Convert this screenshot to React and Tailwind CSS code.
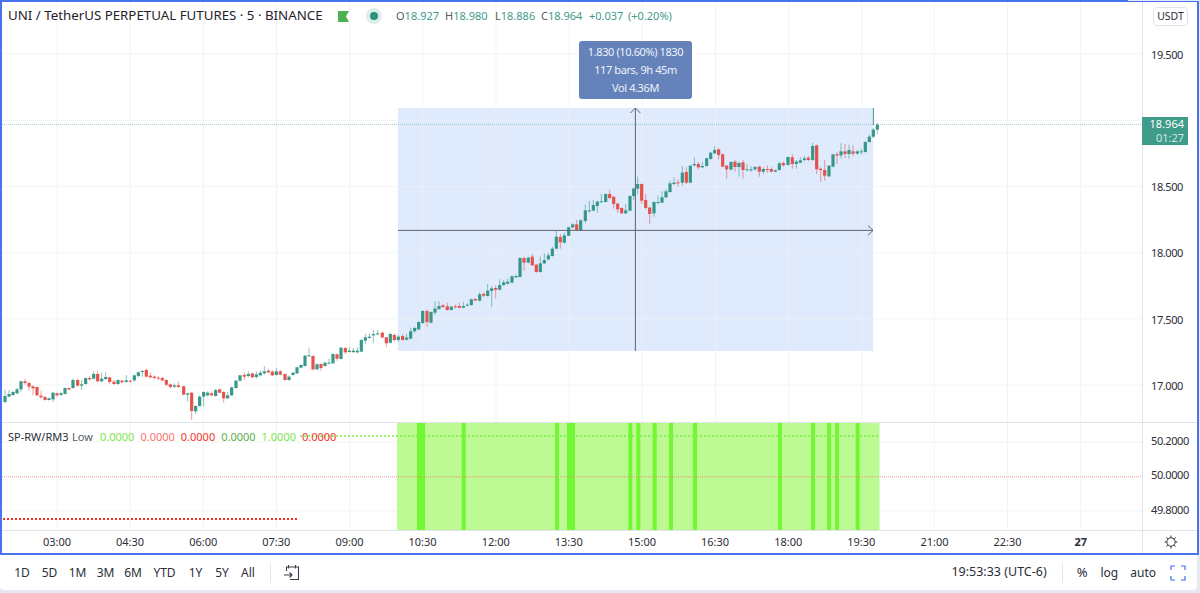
const segA = `15 168 186 g 150 190
27 162 170 g 150 172
39 156 165 g 152 168
51 148 160 g 144 162
63 124 148 g 122 156
75 124 129 r 117 134
87 129 140 r 126 152
99 139 145 r 136 166
111 141 166 r 140 168
123 167 172 r 152 175
135 171 180 r 168 182
147 175 180 g 172 182
159 158 178 g 156 186
171 160 166 r 158 170
183 160 165 g 156 168
195 144 162 g 142 164
207 144 148 r 142 152
219 120 144 g 116 146
233 120 137 r 116 140
245 133 137 g 120 150
257 114 132 g 112 134
269 114 118 r 108 122
281 102 116 g 94 118
293 102 124 r 94 126
305 116 124 g 97 126
317 111 117 g 97 120
329 112 126 r 110 132
342 125 132 r 120 135
354 120 132 g 118 134
366 122 127 r 120 130
379 121 126 g 105 128
391 122 124 r 120 128
403 106 121 g 104 125
415 97 108 g 95 112
427 93 96 g 90 110
439 90 110 r 86 112
451 107 112 r 98 116
463 110 114 r 106 118
475 113 116 r 108 120
487 114 121 r 110 124
499 120 134 r 118 138
511 133 141 r 130 146
523 136 140 g 130 144
535 136 141 r 125 144
551 139 164 r 137 166
563 160 164 g 158 185
575 158 213 r 156 240
587 198 214 g 196 222`

const segB = `599 200 228 g 196 230
611 186 200 g 184 230
623 188 196 g 184 200
635 190 196 r 184 198
647 180 198 g 178 200
659 178 188 r 176 190
671 186 205 r 184 218
683 196 205 g 186 206
695 172 196 g 170 198
708 152 174 g 150 176
720 136 152 g 134 154
733 135 140 r 128 150
745 132 138 g 124 142
757 130 142 r 128 144
769 133 141 g 124 146
781 128 136 g 122 140
793 124 130 g 108 134
805 122 127 r 116 130
817 125 136 r 120 138
829 124 135 g 114 137
841 124 134 r 120 136
855 132 150 r 130 152
867 140 150 g 136 152
879 128 135 g 126 137
891 112 130 g 110 132
903 105 113 g 103 115
915 77 108 g 75 110
927 76 79 g 55 80
939 78 118 r 76 122
951 103 118 g 100 120
963 102 114 r 100 122
975 98 108 g 96 110
987 98 100 g 85 102
999 72 100 g 70 102
1011 73 86 r 70 92
1023 53 87 g 51 89
1036 54 67 r 52 72
1048 62 66 g 52 68
1060 62 66 g 54 70
1072 62 67 g 52 70
1084 30 65 g 28 67
1096 22 32 g 12 42
1108 20 24 g 10 26
1120 12 16 g 0 40
1133 10 13 g 0 16
1147 8 22 r 6 26
1159 22 40 r 20 52
1171 12 38 g 8 40
1183 15 30 r 10 34
1195 20 30 g 14 36`

const segC = `8 438 450 r 432 452
20 443 449 g 432 451
32 424 446 g 413 448
44 414 424 g 410 428
56 396 418 g 394 420
68 363 399 g 360 402
81 363 396 r 358 410
93 366 398 g 364 400
105 356 368 g 334 374
117 348 357 g 334 360
129 346 351 r 342 354
142 349 360 r 338 362
154 350 360 g 348 362
166 349 352 r 344 356
178 348 353 r 338 355
190 348 353 g 336 355
202 344 347 g 340 349
214 328 345 g 326 348
226 327 331 r 324 334
239 313 332 g 306 334
251 312 317 r 306 322
263 302 318 g 282 320
275 295 303 g 288 350
287 294 299 r 286 326
299 285 299 g 268 301
311 277 285 g 270 288
323 275 281 g 266 284
336 259 278 g 256 280
348 258 262 g 254 264
360 204 261 g 202 263
372 204 218 r 200 242
385 203 218 g 200 220
397 200 226 r 192 228
409 224 246 r 222 248
421 220 246 g 200 248
433 210 220 g 190 222
445 196 208 g 188 212
457 176 198 g 170 200
469 140 176 g 120 178
481 141 157 r 132 176
493 136 158 g 128 160
506 112 137 g 110 139
518 103 112 g 100 116
530 103 120 r 90 122
542 91 120 g 88 122
556 61 93 g 44 100
568 61 63 g 32 68
580 45 62 g 30 64
592 35 48 g 32 68
604 34 36 g 12 38
617 12 36 g 10 38
629 12 24 r 0 28
641 20 42 r 18 56
653 41 58 r 38 68
665 54 70 r 52 72
677 61 70 g 42 72`

const segD = `0 258 302 g 256 304
11 236 258 g 232 270
23 222 236 g 200 252
35 222 272 r 220 282
47 270 294 r 252 298
59 293 312 r 290 342
72 276 310 g 274 320
84 276 278 g 256 284
96 262 278 g 244 280
108 244 262 g 238 265
120 220 246 g 212 248
132 218 222 g 202 226
144 217 220 r 208 230
157 188 218 g 168 228
169 186 218 r 172 222
181 167 218 g 165 220
193 162 166 g 142 170
205 162 172 r 156 178
217 168 172 g 155 174
230 145 168 g 143 170
242 128 147 g 126 149
254 120 130 g 108 132
266 118 135 r 114 148
278 133 170 r 131 172
290 167 178 r 165 206
303 156 179 g 154 181
315 155 171 r 150 185
327 159 171 g 155 200
339 157 180 r 150 206
351 178 181 g 162 184
363 178 180 g 168 186
375 171 178 g 168 182
388 170 185 r 168 200
400 177 185 g 172 192
412 177 179 r 166 188
424 177 185 r 172 187
436 181 185 g 178 187
448 160 180 g 156 182
460 159 166 r 154 170
474 141 165 g 139 167
487 142 162 r 132 176
499 155 162 g 150 176
511 151 158 g 142 160
523 145 150 g 138 154
535 143 150 r 138 154
548 108 150 g 98 152
560 106 178 r 104 192
572 176 180 r 172 216
584 180 197 r 150 212
597 167 199 g 165 201
609 133 170 g 131 172
621 133 137 r 126 162
633 124 136 g 100 146
645 124 132 r 102 144
657 120 132 g 104 146
669 124 131 r 106 138
682 124 131 g 120 134
694 124 127 g 116 134
706 96 126 g 94 128
718 80 96 g 74 98
730 59 80 g 54 84
742 44 59 g 38 72`

// values are read at 3x, so divide back down to page pixels
const parse = (text, ox, oy) => text.split('\n').map(line => {
  const [x, top, bottom, c, wt, wb] = line.split(' ')
  return { x: ox + x / 3, top: oy + top / 3, bottom: oy + bottom / 3, up: c === 'g', wt: oy + wt / 3, wb: oy + wb / 3 }
})

const candles = [...parse(segA, 0, 340), ...parse(segB, 0, 330), ...parse(segC, 400, 190), ...parse(segD, 630, 110)]

const gridX = [57, 130.2, 203.4, 276.5, 349.7, 422.9, 496, 569.2, 642.3, 715.5, 788.7, 861.8, 934.3, 1007.5, 1080.6]
const mainGridY = [54, 120.4, 186.6, 252.8, 318.8, 385]
const subGridY = [442, 511]
const bars = [[417, 8], [461.7, 4], [555, 4], [567, 8], [628.3, 4], [636.3, 4], [652.7, 4], [669, 4], [693, 4], [778, 4], [811, 4], [827, 4], [835, 4], [855.7, 4]]
const times = ['03:00', '04:30', '06:00', '07:30', '09:00', '10:30', '12:00', '13:30', '15:00', '16:30', '18:00', '19:30', '21:00', '22:30', '27']
const ranges = [['1D', 'w-[28px]'], ['5D', 'w-[27px]'], ['1M', 'w-[29px]'], ['3M', 'w-[27px]'], ['6M', 'w-[28px]'], ['YTD', 'w-[35px]'], ['1Y', 'w-[27px]'], ['5Y', 'w-[26px]'], ['All', 'w-[26px]']]

function MainChart() {
  return (
    <svg className="absolute inset-0" width="1140" height="420" viewBox="2 2 1140 420">
      <rect x="398" y="108" width="475" height="243" fill="#dfeafd" />
      {gridX.map(x => <line key={x} x1={x} x2={x} y1="2" y2="422" stroke="#eef1f5" strokeOpacity="0.8" />)}
      {mainGridY.map(y => <line key={y} x1="2" x2="1142" y1={y} y2={y} stroke="#eef1f5" strokeOpacity="0.8" />)}
      <line x1="2" x2="1142" y1="124.6" y2="124.6" stroke="#3f9b8a" strokeOpacity="0.45" strokeDasharray="1 1" />
      {candles.map((c, i) => {
        const color = c.up ? '#2f9485' : '#e64c46'
        return (
          <g key={i}>
            <line x1={c.x} x2={c.x} y1={c.wt} y2={c.wb} stroke={color} strokeOpacity="0.55" />
            <rect x={c.x - 1.6} y={c.top} width="3.2" height={Math.max(c.bottom - c.top, 1)} fill={color} fillOpacity="0.95" />
          </g>
        )
      })}
      <path d="M873.4 108V125" stroke="#3f9b8a" fill="none" />
      <path d="M635.4 351V108M630.5 113L635.4 108L640.3 113" stroke="#5f6470" fill="none" />
      <path d="M398 230.4H873M868 225.5L873 230.4L868 235.3" stroke="#5f6470" fill="none" />
    </svg>
  )
}

function SubChart() {
  return (
    <svg className="absolute inset-0" width="1140" height="107" viewBox="2 423 1140 107">
      {gridX.map(x => <line key={x} x1={x} x2={x} y1="423" y2="530" stroke="#f1f3f6" />)}
      {subGridY.map(y => <line key={y} x1="2" x2="1142" y1={y} y2={y} stroke="#f1f3f6" />)}
      <rect x="397" y="423" width="482.5" height="107" fill="#bdfa93" />
      {bars.map(([x, w]) => <rect key={x} x={x} y="423" width={w} height="107" fill="#74f733" />)}
      <line x1="2" x2="1142" y1="476.8" y2="476.8" stroke="#f2796f" strokeOpacity="0.75" strokeDasharray="1 1" />
      <line x1="300" x2="879" y1="436" y2="436" stroke="#74f04a" strokeWidth="1.4" strokeDasharray="2 2" />
      <line x1="3" x2="298" y1="519" y2="519" stroke="#ff2a1f" strokeWidth="1.8" strokeDasharray="2 2" />
    </svg>
  )
}

function CalendarIcon() {
  return (
    <svg width="17" height="17" viewBox="0 0 17 17" fill="none" stroke="#3a3e4a" strokeWidth="1.1">
      <path d="M3.5 7V3H15.5V15.5H7M5.5 1V4.5M12.5 1V4.5M1 11H9M6.5 8.5L9 11L6.5 13.5" />
    </svg>
  )
}

function FullscreenIcon() {
  return (
    <svg width="16" height="16" viewBox="0 0 16 16" fill="none" stroke="#3f6ff0" strokeWidth="1.2">
      <path d="M1 5V1H5M11 1H15V5M15 11V15H11M5 15H1V11" />
    </svg>
  )
}

function SunIcon() {
  return (
    <svg width="14" height="14" viewBox="0 0 14 14" fill="none" stroke="#30333c" strokeWidth="1">
      <circle cx="7" cy="7" r="4.2" />
      <path d="M7 0.5V2.6M7 11.4V13.5M0.5 7H2.6M11.4 7H13.5M2.4 2.4L3.9 3.9M10.1 10.1L11.6 11.6M11.6 2.4L10.1 3.9M3.9 10.1L2.4 11.6" />
    </svg>
  )
}

export default function App() {
  return (
    <div className="w-[1200px] h-[593px] overflow-hidden bg-[#e6e9ef] font-['Noto_Sans',sans-serif] text-[#2b2e38]">
      <div className="relative w-[1199px] h-[555px] bg-white border-2 border-[#4a72ef] flex flex-col">
        <div className="absolute -top-[2px] left-[1126px] w-[71px] h-px bg-[#dfe6fb]" />
        <div className="flex h-[420px]">
          <div className="relative w-[1140px]">
            <MainChart />
            <div className="absolute left-[6px] top-[6px] flex items-center h-[16px]">
              <span className="text-[13.3px] w-[330px] whitespace-nowrap text-[#1f222b]">UNI / TetherUS PERPETUAL FUTURES · 5 · BINANCE</span>
              <svg width="11" height="11" viewBox="0 0 11 11"><path d="M0 0H11L8 5.5L11 11H0Z" fill="#4caf50" /></svg>
              <span className="ml-[17px] w-[16px] h-[16px] rounded-full bg-[#dcefeb] flex items-center justify-center">
                <span className="w-[8px] h-[8px] rounded-full bg-[#2f8f80]" />
              </span>
              <div className="ml-[14px] flex text-[11px] text-[#3f9b8a] whitespace-nowrap">
                <span className="w-[49px]"><span className="text-[#555a66]">O</span>18.927</span>
                <span className="w-[50px]"><span className="text-[#555a66]">H</span>18.980</span>
                <span className="w-[46px]"><span className="text-[#555a66]">L</span>18.886</span>
                <span className="w-[48px]"><span className="text-[#555a66]">C</span>18.964</span>
                <span className="w-[39px]">+0.037</span>
                <span>(+0.20%)</span>
              </div>
            </div>
            <div className="absolute left-[577px] top-[39px] w-[113px] h-[58px] rounded-[3px] bg-[#6582bb] text-[#eef2f9] text-[11px] tracking-[-0.4px] flex flex-col items-center justify-center leading-[18px]">
              <span>1.830 (10.60%) 1830</span>
              <span>117 bars, 9h 45m</span>
              <span>Vol 4.36M</span>
            </div>
          </div>
          <div className="relative w-[55px] border-l border-[#e0e3eb] text-[11px] tracking-[-0.4px]">
            <div className="ml-[10px] mt-[5px] w-[35px] h-[19px] rounded-[4px] border border-[#e0e3eb] flex items-center justify-center text-[10.5px] tracking-normal">USDT</div>
            <div className="ml-[8px] mt-[-4px]">
              {['19.500', '19.000', '18.500', '18.000', '17.500', '17.000'].map(p => (
                <div key={p} className="h-[66.2px] flex items-center">{p}</div>
              ))}
            </div>
            <div className="absolute -left-px top-[115px] w-[46px] h-[28px] bg-[#3f9b8a] leading-[14px] pr-[4px] flex flex-col items-end justify-center tracking-normal">
              <span className="text-white">18.964</span>
              <span className="text-[#cfe6e1]">01:27</span>
            </div>
          </div>
        </div>
        <div className="h-[1px] bg-[#e0e3eb]" />
        <div className="flex h-[107px]">
          <div className="relative w-[1140px]">
            <SubChart />
            <div className="absolute left-[6px] top-[6px] flex text-[11px] whitespace-nowrap">
              <span className="text-[#2b2e38] w-[64px]">SP-RW/RM3</span>
              <span className="text-[#555a66] w-[28px]">Low</span>
              <span className="text-[#7ee84c] w-[40.4px]">0.0000</span>
              <span className="text-[#f7746c] w-[40.4px]">0.0000</span>
              <span className="text-[#f2352c] w-[40.4px]">0.0000</span>
              <span className="text-[#5fab47] w-[40.4px]">0.0000</span>
              <span className="text-[#7ee84c] w-[40.4px]">1.0000</span>
              <span className="text-[#f2352c]">0.0000</span>
            </div>
          </div>
          <div className="w-[55px] border-l border-[#e0e3eb] text-[11px] tracking-[-0.4px] pl-[8px]">
            <div className="h-[19px] mt-[9px] flex items-center">50.2000</div>
            <div className="h-[19px] mt-[15px] flex items-center">50.0000</div>
            <div className="h-[19px] mt-[16px] flex items-center">49.8000</div>
          </div>
        </div>
        <div className="h-[1px] bg-[#e0e3eb]" />
        <div className="flex flex-1">
          <div className="w-[1140px] flex pl-[18.4px] text-[11px] items-center">
            {times.map(t => (
              <span key={t} className={t === '27' ? 'w-[73.14px] text-center font-bold' : 'w-[73.14px] text-center'}>{t}</span>
            ))}
          </div>
          <div className="w-[55px] border-l border-[#e0e3eb] flex items-center justify-center pl-[1px]">
            <SunIcon />
          </div>
        </div>
      </div>
      <div className="w-[1197px] h-[35px] bg-white rounded-b-[4px] flex items-center text-[12px] pl-[8px]">
        {ranges.map(([label, w]) => <span key={label} className={`${w} text-center`}>{label}</span>)}
        <span className="ml-[9px] w-px h-[20px] bg-[#e0e3eb]" />
        <span className="ml-[12px]"><CalendarIcon /></span>
        <span className="ml-auto text-[12.5px]">19:53:33 (UTC-6)</span>
        <span className="ml-[15px] w-px h-[20px] bg-[#e0e3eb]" />
        <span className="ml-[14px] text-[13px]">%</span>
        <span className="ml-[13px] text-[12px]">log</span>
        <span className="ml-[12px] text-[12px]">auto</span>
        <span className="ml-[14px] mr-[11px]"><FullscreenIcon /></span>
      </div>
    </div>
  )
}
